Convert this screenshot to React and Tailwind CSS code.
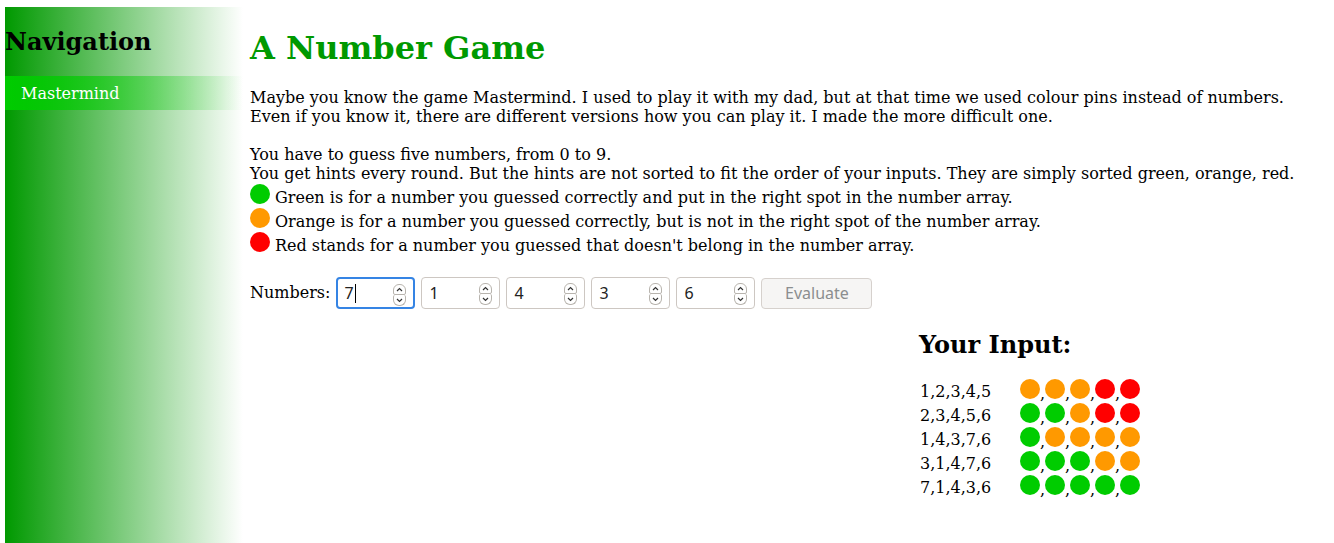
import React from "react";

const serif = { fontFamily: '"DejaVu Serif", serif' };
const sans = { fontFamily: '"Noto Sans", "DejaVu Sans", sans-serif' };

const COLORS = { g: "bg-[#00cc00]", o: "bg-[#ff9900]", r: "bg-[#ff0000]" };

function Dot({ c }) {
  return <span className={`inline-block w-[20px] h-[20px] rounded-full shrink-0 ${COLORS[c]}`} />;
}

function Spinner() {
  return (
    <div className="flex flex-col absolute right-[7px] top-[5px]">
      <div className="w-[13px] h-[11px] border border-[#b8b4ae] rounded-t-[6px] rounded-b-[2px] flex items-center justify-center bg-white">
        <svg width="7" height="5" viewBox="0 0 7 5"><path d="M1 4 L3.5 1.5 L6 4" stroke="#333" strokeWidth="1.2" fill="none" /></svg>
      </div>
      <div className="w-[13px] h-[11px] border border-t-0 border-[#b8b4ae] rounded-b-[6px] rounded-t-[2px] flex items-center justify-center bg-white">
        <svg width="7" height="5" viewBox="0 0 7 5"><path d="M1 1 L3.5 3.5 L6 1" stroke="#333" strokeWidth="1.2" fill="none" /></svg>
      </div>
    </div>
  );
}

function NumBox({ v, focused }) {
  return (
    <div
      className={`relative w-[79px] h-[32px] rounded-[4px] bg-white flex items-center text-[16px] text-[#222] ${
        focused ? "border-2 border-[#3584e4] pl-[6px]" : "border border-[#cdc7c2] pl-[7px]"
      }`}
      style={sans}
    >
      <span>{v}</span>
      {focused && <span className="inline-block w-[1px] h-[19px] bg-black ml-[1px]" />}
      <Spinner />
    </div>
  );
}

const rows = [
  ["1,2,3,4,5", ["o", "o", "o", "r", "r"]],
  ["2,3,4,5,6", ["g", "g", "o", "r", "r"]],
  ["1,4,3,7,6", ["g", "o", "o", "o", "o"]],
  ["3,1,4,7,6", ["g", "g", "g", "o", "o"]],
  ["7,1,4,3,6", ["g", "g", "g", "g", "g"]],
];

function Legend({ c, children }) {
  return (
    <div className="h-[24px] flex items-start">
      <Dot c={c} />
      <span className="ml-[5px] leading-[19px] mt-[4px]">{children}</span>
    </div>
  );
}

export default function App() {
  return (
    <div className="w-[1334px] h-[543px] overflow-hidden bg-white flex pt-[7px] pl-[5px] text-black" style={serif}>
      <aside className="w-[238px] h-[536px] shrink-0 bg-[linear-gradient(to_right,#009900,#ffffff)]">
        <h2 className="text-[24px] font-bold leading-[28px] mt-[21px]">Navigation</h2>
        <div className="mt-[20px] h-[34px] bg-[linear-gradient(to_right,#00cc00,rgba(0,204,0,0))] text-white text-[16px] leading-[34px] pl-[16px] pt-[1px]">
          Mastermind
        </div>
      </aside>
      <main className="pl-[7px] flex-1">
        <h1 className="text-[32px] font-bold text-[#009900] leading-[38px] mt-[22px]">A Number Game</h1>
        <p className="text-[16px] leading-[19px] mt-[21px]">
          Maybe you know the game Mastermind. I used to play it with my dad, but at that time we used colour pins instead of numbers.
          <br />
          Even if you know it, there are different versions how you can play it. I made the more difficult one.
        </p>
        <div className="text-[16px] mt-[19px]">
          <div className="leading-[19px]">You have to guess five numbers, from 0 to 9.</div>
          <div className="leading-[19px]">
            You get hints every round. But the hints are not sorted to fit the order of your inputs. They are simply sorted green, orange, red.
          </div>
          <div className="mt-[1px]">
            <Legend c="g">Green is for a number you guessed correctly and put in the right spot in the number array.</Legend>
            <Legend c="o">Orange is for a number you guessed correctly, but is not in the right spot of the number array.</Legend>
            <Legend c="r">Red stands for a number you guessed that doesn't belong in the number array.</Legend>
          </div>
        </div>
        <div className="flex items-center mt-[21px] text-[16px]">
          <span className="mr-[6px]">Numbers:</span>
          <div className="flex gap-[6px]">
            <NumBox v="7" focused />
            <NumBox v="1" />
            <NumBox v="4" />
            <NumBox v="3" />
            <NumBox v="6" />
          </div>
          <div
            className="ml-[6px] w-[111px] h-[31px] rounded-[4px] border border-[#d6d1cd] bg-[#f6f5f4] text-[#8b8e8f] text-[16px] flex items-center justify-center"
            style={sans}
          >
            Evaluate
          </div>
        </div>
        <div className="ml-[669px] mt-[22px]">
          <h2 className="text-[24px] font-bold leading-[28px]">Your Input:</h2>
          <div className="mt-[20px] text-[16px]">
            {rows.map(([nums, dots], i) => (
              <div key={i} className="flex h-[24px] items-start">
                <span className="w-[101px] leading-[19px] mt-[3px] pl-[1px]">{nums}</span>
                <span className="flex items-start">
                  {dots.map((d, j) => (
                    <span key={j} className="flex items-start">
                      <Dot c={d} />
                      {j < 4 && <span className="w-[5px] leading-[19px] mt-[5px] text-[16px]">,</span>}
                    </span>
                  ))}
                </span>
              </div>
            ))}
          </div>
        </div>
      </main>
    </div>
  );
}
